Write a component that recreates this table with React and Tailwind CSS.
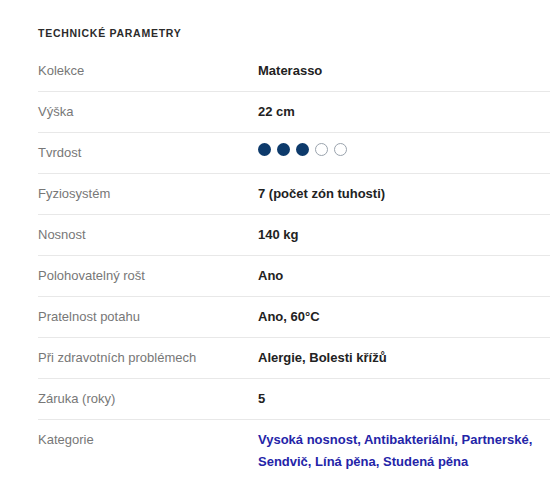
const rows = [
  { label: 'Kolekce', value: 'Materasso' },
  { label: 'Výška', value: '22 cm' },
  { label: 'Tvrdost', dots: 3 },
  { label: 'Fyziosystém', value: '7 (počet zón tuhosti)' },
  { label: 'Nosnost', value: '140 kg' },
  { label: 'Polohovatelný rošt', value: 'Ano' },
  { label: 'Pratelnost potahu', value: 'Ano, 60°C' },
  { label: 'Při zdravotních problémech', value: 'Alergie, Bolesti křížů' },
  { label: 'Záruka (roky)', value: '5' },
];

const categories = ['Vysoká nosnost', 'Antibakteriální', 'Partnerské', 'Sendvič', 'Líná pěna', 'Studená pěna'];

function Dots({ filled }) {
  return (
    <div className="flex h-[22px] items-start gap-[6px] pt-[1px]">
      {[0, 1, 2, 3, 4].map((i) => (
        <span
          key={i}
          className={
            i < filled
              ? 'block h-[13px] w-[13px] rounded-full bg-[#0d3a6b]'
              : 'block h-[13px] w-[13px] rounded-full border border-[#9aa3ad] bg-white'
          }
        />
      ))}
    </div>
  );
}

export default function App() {
  return (
    <div
      className="min-h-[500px] w-[550px] bg-white pl-[38px] pt-[27px] text-[13px]"
      style={{ fontFamily: '"Liberation Sans", Arial, sans-serif' }}
    >
      <h2 className="mb-[12px] text-[10.5px] leading-[12px] font-bold tracking-[0.07em] text-[#2b2b2b] uppercase">
        Technické parametry
      </h2>
      <div>
        {rows.map((r) => (
          <div key={r.label} className="flex border-b border-[#e8e8e8] py-[9px] leading-[22px]">
            <div className="w-[220px] shrink-0 text-[#777]">{r.label}</div>
            <div className="font-bold text-[#222]">
              {r.dots ? <Dots filled={r.dots} /> : r.value}
            </div>
          </div>
        ))}
        <div className="flex py-[9px] leading-[22px]">
          <div className="w-[220px] shrink-0 text-[#777]">Kategorie</div>
          <div className="w-[280px] font-bold text-[#2424a8]">
            {categories.map((c, i) => (
              <span key={c}>
                <a href="#" className="hover:underline">{c}</a>
                {i < categories.length - 1 ? ', ' : ''}
              </span>
            ))}
          </div>
        </div>
      </div>
    </div>
  );
}
